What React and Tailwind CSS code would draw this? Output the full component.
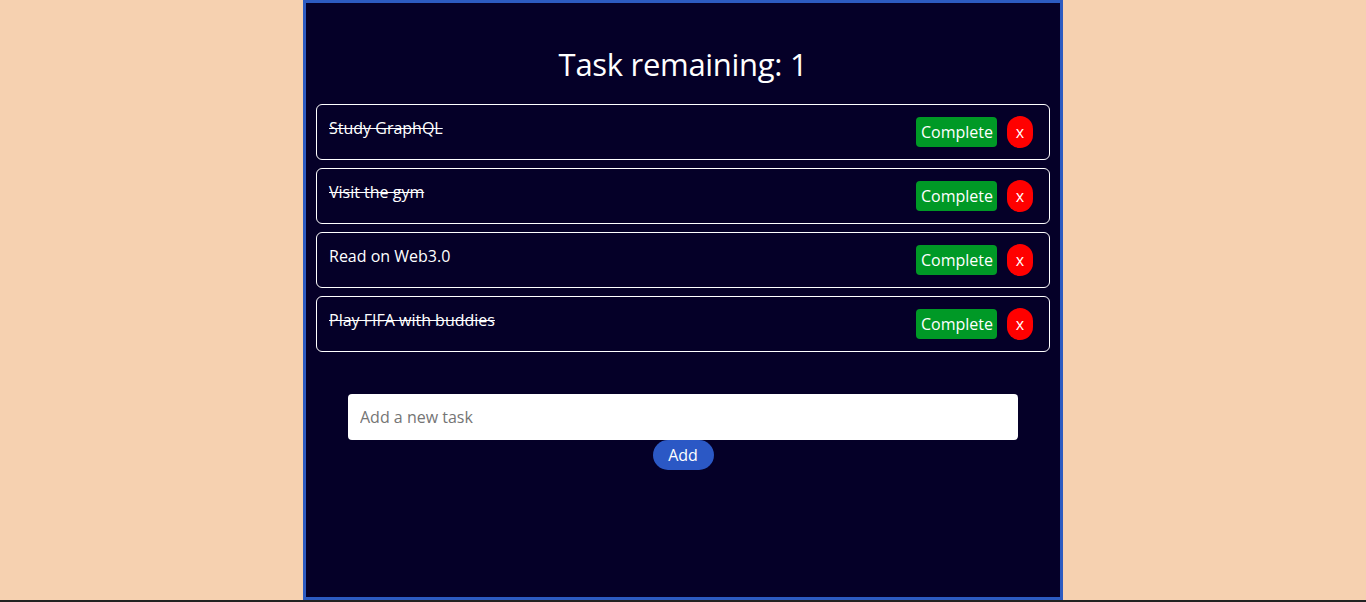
import { useState } from 'react';

const initialTasks = [
  { id: 1, text: 'Study GraphQL', done: true },
  { id: 2, text: 'Visit the gym', done: true },
  { id: 3, text: 'Read on Web3.0', done: false },
  { id: 4, text: 'Play FIFA with buddies', done: true },
];

const TaskItem = ({ task, onComplete, onDelete }) => (
  <div className="flex items-center justify-between h-[56px] pl-3 pr-4 border border-white rounded-md">
    <span className={`self-start pt-[11px] text-[16px] text-white ${task.done ? 'line-through' : ''}`}>
      {task.text}
    </span>
    <div className="flex items-center gap-[10px]">
      <button
        onClick={() => onComplete(task.id)}
        className="h-[30px] px-[5px] w-[81px] rounded bg-[#009926] text-white text-[16px]"
      >
        Complete
      </button>
      <button
        onClick={() => onDelete(task.id)}
        className="h-[32px] w-[26px] rounded-full bg-[#ff0000] text-white text-[16px]"
      >
        x
      </button>
    </div>
  </div>
);

export default function App() {
  const [tasks, setTasks] = useState(initialTasks);
  const [value, setValue] = useState('');

  const remaining = tasks.filter((t) => !t.done).length;

  const addTask = () => {
    if (!value.trim()) return;
    setTasks([...tasks, { id: Date.now(), text: value, done: false }]);
    setValue('');
  };

  return (
    <div className="bg-[#f6d1b0] h-[602px] flex flex-col font-['Open_Sans',sans-serif]">
      <div className="mx-auto w-[760px] h-[600px] border-[3px] border-[#2d5bc1] bg-[#050028] px-[10px]">
        <h1 className="text-white text-[31px] text-center mt-[42px] mb-[21px] leading-[38px] tracking-[-0.3px]">
          Task remaining: {remaining}
        </h1>
        <div className="flex flex-col gap-2">
          {tasks.map((task) => (
            <TaskItem
              key={task.id}
              task={task}
              onComplete={(id) => setTasks(tasks.map((t) => (t.id === id ? { ...t, done: true } : t)))}
              onDelete={(id) => setTasks(tasks.filter((t) => t.id !== id))}
            />
          ))}
        </div>
        <div className="flex flex-col items-center mt-[42px]">
          <input
            value={value}
            onChange={(e) => setValue(e.target.value)}
            placeholder="Add a new task"
            className="w-[670px] h-[46px] rounded bg-white px-3 text-[16px] text-gray-800 placeholder:text-[#757575] outline-none"
          />
          <button
            onClick={addTask}
            className="h-[30px] w-[61px] rounded-full bg-[#2b58c5] text-white text-[16px]"
          >
            Add
          </button>
        </div>
      </div>
      <div className="h-[2px] bg-[#222]" />
    </div>
  );
}
